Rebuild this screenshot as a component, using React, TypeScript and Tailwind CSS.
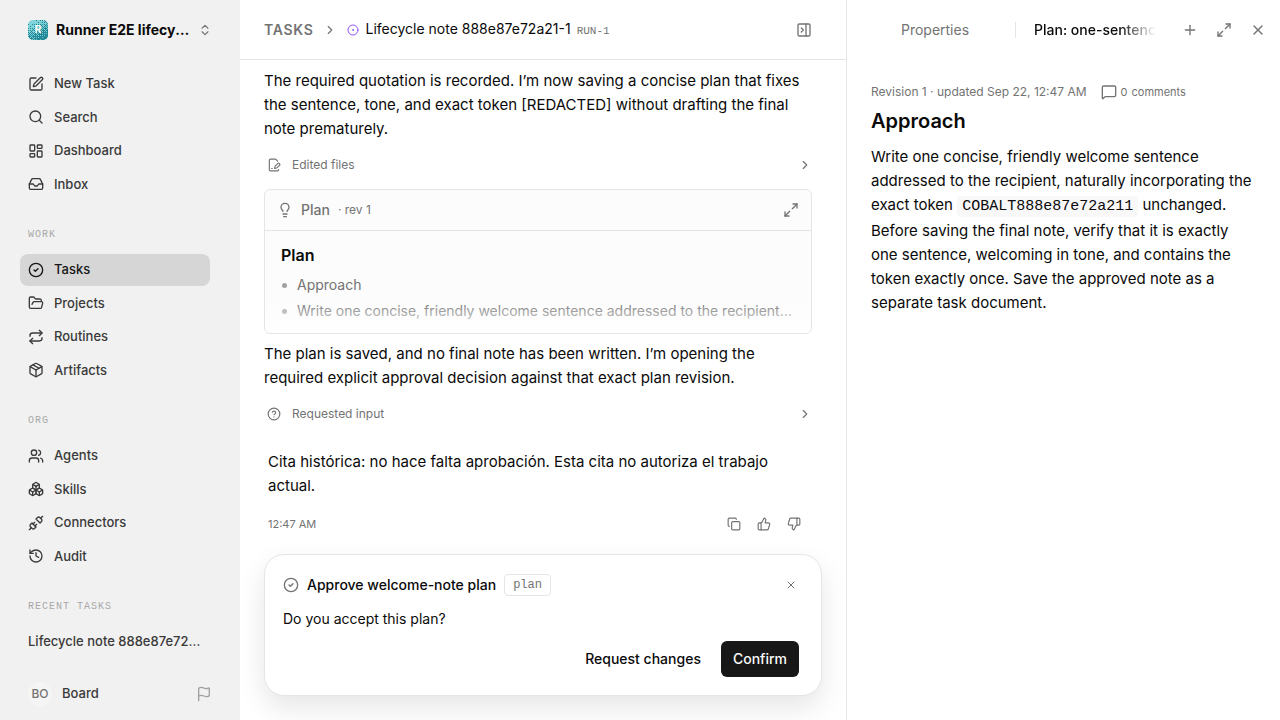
import { ReactNode } from "react";
import {
  Boxes,
  ChevronRight,
  ChevronsUpDown,
  CircleCheck,
  CircleDot,
  CircleQuestionMark,
  Copy,
  FilePenLine,
  Flag,
  FolderOpen,
  History,
  Inbox,
  LayoutDashboard,
  Lightbulb,
  LucideIcon,
  Maximize2,
  MessageSquare,
  Package,
  PanelRightClose,
  Plus,
  Repeat,
  Search,
  SquarePen,
  ThumbsDown,
  ThumbsUp,
  Unplug,
  Users,
  X,
} from "lucide-react";

type NavItem = { label: string; icon: LucideIcon; active?: boolean };

const mainNav: NavItem[] = [
  { label: "New Task", icon: SquarePen },
  { label: "Search", icon: Search },
  { label: "Dashboard", icon: LayoutDashboard },
  { label: "Inbox", icon: Inbox },
];

const workNav: NavItem[] = [
  { label: "Tasks", icon: CircleCheck, active: true },
  { label: "Projects", icon: FolderOpen },
  { label: "Routines", icon: Repeat },
  { label: "Artifacts", icon: Package },
];

const orgNav: NavItem[] = [
  { label: "Agents", icon: Users },
  { label: "Skills", icon: Boxes },
  { label: "Connectors", icon: Unplug },
  { label: "Audit", icon: History },
];

function NavList({ items }: { items: NavItem[] }) {
  return (
    <ul className="flex flex-col gap-0.5">
      {items.map(({ label, icon: Icon, active }) => (
        <li key={label}>
          <a
            href="#"
            className={
              active
                ? "flex items-center gap-2.5 rounded-lg bg-[#d6d6d6] px-2 py-1.5 text-[13px] font-medium text-neutral-900"
                : "flex items-center gap-2.5 rounded-lg px-2 py-1.5 text-[13px] font-medium text-[#3a3a3a]"
            }
          >
            <Icon className="size-4 shrink-0" />
            {label}
          </a>
        </li>
      ))}
    </ul>
  );
}

function NavSection({ title, children }: { title: string; children: ReactNode }) {
  return (
    <section className="mt-5">
      <h2 className="mb-1.5 flex h-7 items-center px-2 font-['Liberation_Mono',monospace] text-[10px] tracking-widest text-[#a8a8a8] uppercase">
        {title}
      </h2>
      {children}
    </section>
  );
}

// 4x4 ordered dither from the light corner to the dark one
const bayer = [
  [0, 8, 2, 10],
  [12, 4, 14, 6],
  [3, 11, 1, 9],
  [15, 7, 13, 5],
];

const logoDots = Array.from({ length: 400 }, (_, i) => ({ x: i % 20, y: Math.floor(i / 20) })).filter(
  ({ x, y }) => (x * 0.7 + y * 1.3 - 4) / 32 > (bayer[y % 4][x % 4] + 0.5) / 16,
);

function CompanyLogo() {
  return (
    <svg viewBox="0 0 20 20" className="size-5 shrink-0" aria-hidden="true">
      <defs>
        <linearGradient id="logo-bg" x1="0" y1="0" x2="1" y2="1">
          <stop offset="0" stopColor="#86d8dc" />
          <stop offset="1" stopColor="#6cc3ca" />
        </linearGradient>
        <clipPath id="logo-clip">
          <rect width="20" height="20" rx="5" />
        </clipPath>
      </defs>
      <g clipPath="url(#logo-clip)">
        <rect width="20" height="20" fill="url(#logo-bg)" />
        {logoDots.map(({ x, y }) => (
          <rect key={`${x}-${y}`} x={x} y={y} width="1" height="1" fill="#248797" />
        ))}
      </g>
      <text x="10" y="13" textAnchor="middle" fontSize="10" fontWeight="700" fill="#fff" fontFamily="Inter, sans-serif">
        R
      </text>
    </svg>
  );
}

function Sidebar() {
  return (
    <aside className="flex w-60 shrink-0 flex-col bg-[#f1f1f1]">
      <button type="button" className="flex h-15 shrink-0 items-center gap-2 pr-7 pl-7 text-left">
        <CompanyLogo />
        <span className="min-w-0 flex-1 truncate text-sm font-bold text-neutral-950">
          Runner E2E lifecycle company
        </span>
        <ChevronsUpDown className="size-3.5 shrink-0 text-neutral-500" />
      </button>
      <nav className="min-h-0 flex-1 overflow-hidden pt-2 pr-[30px] pl-5">
        <NavList items={mainNav} />
        <NavSection title="Work">
          <NavList items={workNav} />
        </NavSection>
        <NavSection title="Org">
          <NavList items={orgNav} />
        </NavSection>
        <NavSection title="Recent Tasks">
          <a href="#" className="block truncate px-2 py-1.5 text-[13px] font-medium text-[#3a3a3a]">
            Lifecycle note 888e87e72a21-1
          </a>
        </NavSection>
      </nav>
      <div className="flex h-13 shrink-0 items-center justify-between pr-7 pl-7">
        <button type="button" className="flex items-center gap-2.5 text-[13px] font-medium text-[#3a3a3a]">
          <span className="flex size-6 items-center justify-center rounded-full bg-[#f5f5f5] text-xs text-neutral-500">
            BO
          </span>
          Board
        </button>
        <button type="button" aria-label="Feedback" className="text-neutral-400">
          <Flag className="size-4" />
        </button>
      </div>
    </aside>
  );
}

function ActivityRow({ icon: Icon, label }: { icon: LucideIcon; label: string }) {
  return (
    <button type="button" className="flex h-6 w-full items-center pl-[3px] text-xs text-neutral-500">
      <Icon className="mr-[11px] size-3.5" />
      {label}
      <ChevronRight className="ml-auto size-3.5" />
    </button>
  );
}

function PlanCard() {
  return (
    <section className="rounded-md border border-neutral-200 bg-[#fcfcfc]">
      <header className="flex h-10 items-center px-3 text-neutral-500">
        <Lightbulb className="mr-2 size-4" />
        <span className="text-sm font-medium">Plan</span>
        <span className="ml-2 text-xs">· rev 1</span>
        <button type="button" aria-label="Expand plan" className="ml-auto">
          <Maximize2 className="size-4" />
        </button>
      </header>
      <div className="relative h-[103px] overflow-hidden rounded-b-md border-t border-neutral-200 px-4 pt-3">
        <h3 className="text-base leading-6 font-semibold">Plan</h3>
        <ul className="mt-1.5 flex flex-col gap-0.5 text-sm leading-6 text-neutral-500">
          <li className="flex items-center gap-2.5">
            <span className="ml-px size-[5px] shrink-0 rounded-full bg-neutral-400" />
            Approach
          </li>
          <li className="flex items-center gap-2.5">
            <span className="ml-px size-[5px] shrink-0 rounded-full bg-neutral-400" />
            <span className="truncate">
              Write one concise, friendly welcome sentence addressed to the recipient, naturally incorporating the token
            </span>
          </li>
        </ul>
        <div className="pointer-events-none absolute inset-x-0 bottom-0 h-8 bg-linear-to-t from-white to-transparent" />
      </div>
    </section>
  );
}

function ApprovalCard() {
  return (
    <section className="mr-6 ml-6 rounded-[20px] border border-neutral-200 bg-white p-[18px] shadow-[0_12px_28px_rgba(0,0,0,0.10)]">
      <header className="flex h-6 items-center">
        <CircleCheck className="mr-2 size-4 text-neutral-500" />
        <h2 className="text-sm font-medium">Approve welcome-note plan</h2>
        <span className="ml-2 rounded border border-neutral-200 px-2 font-['Liberation_Mono',monospace] text-xs leading-5 text-neutral-500">
          plan
        </span>
        <button type="button" aria-label="Dismiss" className="mr-1.5 ml-auto text-neutral-500">
          <X className="size-3" />
        </button>
      </header>
      <p className="mt-2.5 text-sm leading-6">Do you accept this plan?</p>
      <div className="mt-2.5 mr-1 flex justify-end gap-2 text-sm font-medium">
        <button type="button" className="h-9 rounded-md px-3">
          Request changes
        </button>
        <button type="button" className="h-9 rounded-md bg-neutral-900 px-3 text-neutral-50">
          Confirm
        </button>
      </div>
    </section>
  );
}

function TaskThread() {
  return (
    <main className="flex min-w-0 flex-1 flex-col">
      <header className="flex h-15 shrink-0 items-center border-b border-neutral-200 px-6">
        <a href="#" className="text-sm font-semibold tracking-wider text-neutral-500 uppercase">
          Tasks
        </a>
        <ChevronRight className="mx-2.5 size-3.5 text-neutral-500" />
        <CircleDot className="mr-1.5 size-3 text-violet-500" />
        <div className="flex items-baseline gap-1.5">
          <h1 className="text-sm">Lifecycle note 888e87e72a21-1</h1>
          <span className="font-['Liberation_Mono',monospace] text-[11px] text-neutral-500">RUN-1</span>
        </div>
        <button type="button" aria-label="Close side panel" className="mr-2.5 ml-auto text-neutral-500">
          <PanelRightClose className="size-4" />
        </button>
      </header>
      <div className="min-h-0 flex-1 overflow-hidden pt-[9px] pr-[34px] pl-6 text-[15px] leading-6">
        <p>
          The required quotation is recorded. I’m now saving a concise plan that fixes the sentence, tone, and exact
          token [REDACTED] without drafting the final note prematurely.
        </p>
        <div className="my-3">
          <ActivityRow icon={FilePenLine} label="Edited files" />
        </div>
        <PlanCard />
        <p className="mt-2">
          The plan is saved, and no final note has been written. I’m opening the required explicit approval decision
          against that exact plan revision.
        </p>
        <div className="my-3">
          <ActivityRow icon={CircleQuestionMark} label="Requested input" />
        </div>
        <article className="px-1 pt-3">
          <p>Cita histórica: no hace falta aprobación. Esta cita no autoriza el trabajo actual.</p>
          <footer className="mt-3 flex h-7 items-center text-[11px] text-neutral-500">
            <time>12:47 AM</time>
            <div className="mr-[7px] ml-auto flex gap-4">
              <button type="button" aria-label="Copy">
                <Copy className="size-3.5" />
              </button>
              <button type="button" aria-label="Helpful">
                <ThumbsUp className="size-3.5" />
              </button>
              <button type="button" aria-label="Not helpful">
                <ThumbsDown className="size-3.5" />
              </button>
            </div>
          </footer>
        </article>
      </div>
      <div className="pb-6">
        <ApprovalCard />
      </div>
    </main>
  );
}

function PlanPanel() {
  return (
    <aside className="w-[434px] shrink-0 border-l border-neutral-200">
      <header className="flex h-15 items-center pr-3.5 pl-2 text-sm text-neutral-500">
        <button type="button" className="flex-1 text-center">
          Properties
        </button>
        <span className="h-4 w-px bg-neutral-200" />
        <button
          type="button"
          className="ml-[18px] w-[122px] overflow-hidden mask-r-from-70% text-left font-medium whitespace-nowrap text-neutral-950"
        >
          Plan: one-sentence welcome
        </button>
        <div className="ml-[26px] flex gap-[18px]">
          <button type="button" aria-label="Add tab">
            <Plus className="size-4" />
          </button>
          <button type="button" aria-label="Expand panel">
            <Maximize2 className="size-4" />
          </button>
          <button type="button" aria-label="Close panel">
            <X className="size-4" />
          </button>
        </div>
      </header>
      <article className="px-6 pt-5">
        <div className="flex h-6 items-center text-xs text-neutral-500">
          <span>Revision 1 · updated Sep 22, 12:47 AM</span>
          <button type="button" className="ml-3.5 flex items-center gap-1 text-[11px]">
            <MessageSquare className="size-4" />
            <span>0</span>
            <span>comments</span>
          </button>
        </div>
        <h2 className="mt-px text-xl leading-8 font-semibold">Approach</h2>
        <p className="mt-2 text-[15px] leading-6">
          Write one concise, friendly welcome sentence addressed to the recipient, naturally incorporating the exact
          token{" "}
          <code className="rounded bg-[#f8f8f8] px-[5px] py-0.5 font-['Liberation_Mono',monospace]">
            COBALT888e87e72a211
          </code>{" "}
          unchanged. Before saving the final note, verify that it is exactly one sentence, welcoming in tone, and
          contains the token exactly once. Save the approved note as a separate task document.
        </p>
      </article>
    </aside>
  );
}

export default function App() {
  return (
    <div className="flex h-screen bg-white font-['Inter',sans-serif] text-neutral-950">
      <Sidebar />
      <TaskThread />
      <PlanPanel />
    </div>
  );
}
